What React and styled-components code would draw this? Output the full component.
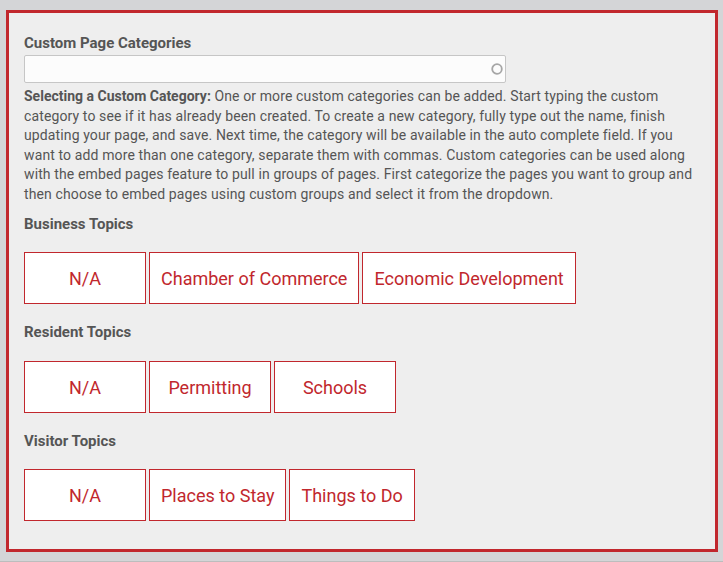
import React from "react";
import styled, { createGlobalStyle } from "styled-components";

const Global = createGlobalStyle`
  html, body { margin: 0; padding: 0; background: #d4d5d7; }
  body { font-family: Roboto, "Liberation Sans", sans-serif; }
  * { box-sizing: border-box; }
`;

const Page = styled.div`
  width: 723px;
  height: 562px;
  padding: 10px 5px 10px 6px;
  background: #d4d5d7;
  border-bottom: 1px solid #bdbdbd;
`;

const Panel = styled.div`
  width: 712px;
  height: 542px;
  border: 3px solid #c1272d;
  background: #eeeeee;
  padding: 20px 15px 0 15px;
  color: #555555;
`;

const Label = styled.div`
  font-size: 15px;
  font-weight: 700;
  line-height: 20px;
  color: #555555;
  margin-top: ${(p) => p.$mt || 0}px;
`;

const InputWrap = styled.div`
  position: relative;
  width: 482px;
  height: 28px;
  margin-top: 2px;
  background: #fcfcfc;
  border: 1px solid #c6c6c6;
  border-radius: 2px;
`;

const Spinner = styled.svg`
  position: absolute;
  right: 1px;
  top: 6px;
`;

const Help = styled.p`
  margin: 4px 0 0 0;
  font-size: 14px;
  line-height: 19.5px;
  letter-spacing: 0.12px;
  color: #555555;
  b { font-weight: 700; letter-spacing: 0; }
`;

const ButtonRow = styled.div`
  display: flex;
  gap: 3px;
  margin-top: ${(p) => p.$mt || 18}px;
`;

const TopicButton = styled.button`
  min-width: 122px;
  height: 52px;
  padding: 0 11px;
  background: #ffffff;
  border: 1px solid #c1272d;
  border-radius: 0;
  color: #c1272d;
  font-family: Roboto, "Liberation Sans", sans-serif;
  font-size: 18px;
  font-weight: 400;
  cursor: pointer;
`;

const groups = [
  { title: "Business Topics", labelGap: 10, rowGap: 18, items: ["N/A", "Chamber of Commerce", "Economic Development"] },
  { title: "Resident Topics", labelGap: 18, rowGap: 19, items: ["N/A", "Permitting", "Schools"] },
  { title: "Visitor Topics", labelGap: 18, rowGap: 18, items: ["N/A", "Places to Stay", "Things to Do"] },
];

export default function App() {
  return (
    <>
      <Global />
      <Page>
        <Panel>
          <Label>Custom Page Categories</Label>
          <InputWrap>
            <Spinner width="14" height="14" viewBox="0 0 14 14">
              <circle cx="7" cy="7" r="4.8" fill="none" stroke="#a6a6a6" strokeWidth="1.8" />
            </Spinner>
          </InputWrap>
          <Help>
            <b>Selecting a Custom Category:</b> One or more custom categories can be added. Start typing the custom
            category to see if it has already been created. To create a new category, fully type out the name, finish
            updating your page, and save. Next time, the category will be available in the auto complete field. If you
            want to add more than one category, separate them with commas. Custom categories can be used along
            with the embed pages feature to pull in groups of pages. First categorize the pages you want to group and
            then choose to embed pages using custom groups and select it from the dropdown.
          </Help>
          {groups.map((g) => (
            <React.Fragment key={g.title}>
              <Label $mt={g.labelGap}>{g.title}</Label>
              <ButtonRow $mt={g.rowGap}>
                {g.items.map((it) => (
                  <TopicButton key={it}>{it}</TopicButton>
                ))}
              </ButtonRow>
            </React.Fragment>
          ))}
        </Panel>
      </Page>
    </>
  );
}
